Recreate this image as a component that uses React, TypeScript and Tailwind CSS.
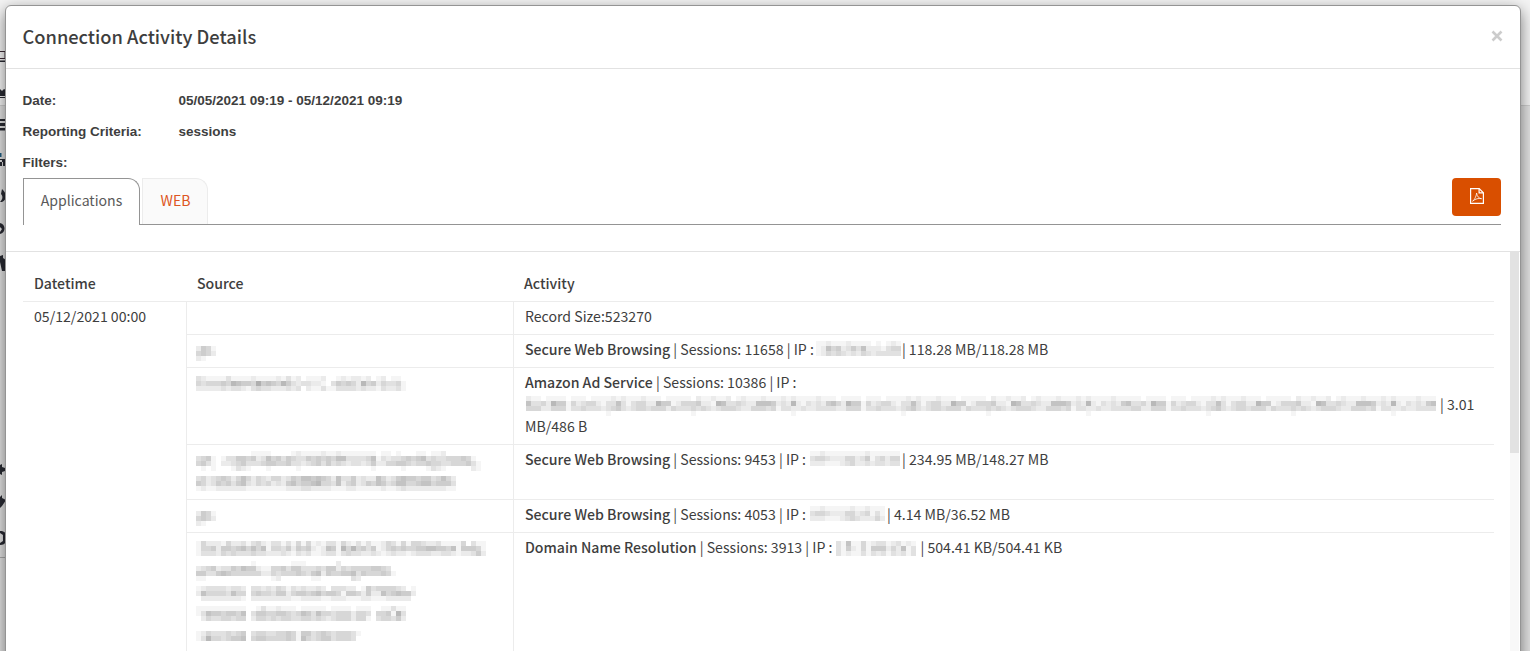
import type { ReactNode } from 'react'

type MaskProps = {
  rows: string[]
  top: number
  className?: string
}

// Pixelated block over private values, one digit per 5px cell (0 = clear, 9 = darkest)
function Mask({ rows, top, className = '' }: MaskProps) {
  const width = Math.max(...rows.map((row) => row.length)) * 5
  return (
    <svg width={width} height={22} className={`inline-block align-top overflow-visible ${className}`} shapeRendering="crispEdges">
      {rows.map((row, y) =>
        row.split('').map((cell, x) => {
          const level = 255 - Number(cell) * 10
          return cell === '0' ? null : (
            <rect key={`${x}-${y}`} x={x * 5} y={top + 2 + y * 5} width={5} height={5} fill={`rgb(${level},${level},${level})`} />
          )
        })
      )}
    </svg>
  )
}

const longIp = [
  '21101111011101111212111211101111102112112012111211121211112111',
  '63342755142344213363134422755124445221763343226665232721323256',
  '44422444133433323453234434442433343432344432244434133223223333',
  '00000000000000001000000000000000010000000000000000000100000000',
]

const longIpRows = longIp.map((row) => row + row.slice(3) + row.slice(1))

type Row = {
  source: MaskProps[]
  activity: ReactNode
}

const records: Row[] = [
  {
    source: [],
    activity: 'Record Size:523270',
  },
  {
    source: [{ top: 6, rows: ['2541', '4542', '2100'] }],
    activity: (
      <>
        <b className="font-medium">Secure Web Browsing</b> | Sessions: 11658 | IP :
        <Mask className="ml-[2px] mr-px" top={1} rows={['11211121111010121', '12645235362221344', '12434323243233333']} />
        | 118.28 MB/118.28 MB
      </>
    ),
  },
  {
    source: [
      {
        top: 3,
        rows: [
          '321111311112111121312011120012122120120110',
          '434445476554856547532332210354542745243341',
          '222223233213433222323021131133332322132231',
        ],
      },
    ],
    activity: (
      <>
        <b className="font-medium">Amazon Ad Service</b> | Sessions: 10386 | IP :
        <br />
        <Mask className="ml-px mr-[4px]" top={1} rows={longIpRows} />
        | 3.01
        <br />
        MB/486 B
      </>
    ),
  },
  {
    source: [
      {
        top: 1,
        rows: [
          '000000000001111000012111121121111111011010001101120000000',
          '345101335545236453543354545466333346132334545634334445410',
          '453102234533345544533234535343233235224455434454433444531',
          '010100013210001000001000000000000001000001000013210000021',
        ],
      },
      {
        top: 4,
        rows: [
          '34234542464243244235466565426335232264235655455346420',
          '54235453563243423256455674436245235465346644566455530',
          '12112222221111111122233222211122111112112322222222110',
        ],
      },
    ],
    activity: (
      <>
        <b className="font-medium">Secure Web Browsing</b> | Sessions: 9453 | IP :
        <Mask className="ml-[4px] mr-[2px]" top={1} rows={['112111111112111111', '344322244235134244', '222111234223233233']} />
        | 234.95 MB/148.27 MB
      </>
    ),
  },
  {
    source: [{ top: 6, rows: ['2541', '4542', '2100'] }],
    activity: (
      <>
        <b className="font-medium">Secure Web Browsing</b> | Sessions: 4053 | IP :
        <Mask className="ml-[4px] mr-[2px]" top={1} rows={['112111112112111', '344322244234131', '222111234322242']} />
        | 4.14 MB/36.52 MB
      </>
    ),
  },
  {
    source: [
      {
        top: 3,
        rows: [
          '1422214223134213313141412133142131311243141443223111140311',
          '1445255456464614435254521265174745351245454455665546155541',
          '1333243433343322232132311233134332232123221233322332122352',
        ],
      },
      {
        top: 1,
        rows: [
          '0000000000010000000111000000200000000000',
          '2345233546552114453553334355243444455430',
          '5533565444444224344454356254455635444541',
          '1100000000000001200000011000000320000000',
        ],
      },
      {
        top: 4,
        rows: [
          '12333323320332324313232232033322015344443201',
          '26444436440454435524554564554155425226456552',
          '02222222210222222221122221122211122111222220',
        ],
      },
      {
        top: 2,
        rows: [
          '111111111100131121110111110111101110011311',
          '136554554603554455434653644344424430445173',
          '024334434402443434433443432344424410344352',
        ],
      },
      {
        top: 5,
        rows: [
          '124333434503443344541553454344431',
          '137443455604554444541643455344430',
        ],
      },
    ],
    activity: (
      <>
        <b className="font-medium">Domain Name Resolution</b> | Sessions: 3913 | IP :
        <Mask className="ml-[4px] mr-[4px]" top={3} rows={['3161141233123121', '3152141555242613', '3121131323132313']} />
        | 504.41 KB/504.41 KB
      </>
    ),
  },
]

function Detail({ label, value }: { label: string; value?: string }) {
  return (
    <div className="flex h-[31px] items-center font-['Liberation_Sans',Arial,sans-serif] text-[13.5px] font-bold">
      <span className="w-[156px]">{label}</span>
      <span>{value}</span>
    </div>
  )
}

// Strip of the side menu left uncovered by the dialog
function MenuEdge() {
  return (
    <svg width="6" height="651" className="absolute left-0 top-0" fill="#292b33">
      <path d="M0 51.5h5v7H0" fill="none" stroke="#3c2a35" />
      <path d="M0 60.5h6v1.5H0z" />
      <path d="M0 89l2 2 2-2 2 1v6H0zM0 97h6v1H0z" />
      <path d="M0 119h6v2H0zM0 123h6v3H0zM0 128h6v2.500H0z" />
      <path d="M0 153h1.500v4H0z" fill="#1d5c80" />
      <path d="M0 159h5v3h1v4H3v-4H2v4H0v-4h2v-2H0z" />
      <path d="M2 189c5 4 5 11 0 13H0c3-3 3-6 1-8z" />
      <path d="M0 223c6 1 6 10 0 11v-2l2-3-2-2z" />
      <path d="M0 256l3-1v3l3 2v11H2l-2-9z" />
      <path d="M0 465l2-1v3l3 1v3l-3 1v3l-2-1z" />
      <path d="M0 497l2-2v3l4 2-4 6-2 2z" />
      <path d="M0 531c4 0 6 2 6 4v6c-1 3-3 4-6 4v-2l3-2v-6l-3-2z" />
      <path d="M0 557h6v1H0z" fill="#aaa" />
    </svg>
  )
}

function PdfIcon() {
  return (
    <svg width="14" height="16" viewBox="0 0 14 16" fill="none" stroke="#fff" strokeWidth="1.2">
      <path d="M.6.6h8.600l4.200 4.200v10.600H.6z" />
      <path d="M9.100.8v4.100h4.100" />
      <path d="M2.600 13.200c1.200-.5 3.600-4.400 4-8.100.3 3.200 2.600 5.700 5 5.600-2.600-.8-6.400.1-9 2.500z" strokeWidth=".8" />
    </svg>
  )
}

export default function App() {
  return (
    <div className="relative h-[651px] overflow-hidden bg-[#e2e2e2] pl-[5px] pt-[5px] font-['Noto_Sans_CJK_JP','Source_Sans_Pro',sans-serif] text-[14.12px] leading-[22px] text-[#3e3e3e]">
      <div className="absolute inset-x-0 top-0 h-[106px] border-b border-[#cfcfcf] bg-[#f4f4f4]" />
      <MenuEdge />

      <div className="relative flex h-[700px] w-[1516px] flex-col rounded-[6px] border border-[#949494] bg-white shadow-[0_5px_15px_rgba(0,0,0,0.5)]">
        <header className="flex h-[63px] shrink-0 items-center justify-between border-b border-[#e2e2e2] pl-[16.5px] pr-[17px]">
          <h1 className="pb-[2px] text-[18.25px] font-medium">Connection Activity Details</h1>
          <button aria-label="Close" className="mb-[3px]">
            <svg width="12" height="12" viewBox="0 0 12 12" stroke="#ccc" strokeWidth="2.600">
              <path d="M1.500 1.500l9 9M10.500 1.500l-9 9" />
            </svg>
          </button>
        </header>

        <div className="h-[183px] shrink-0 border-b border-[#e2e2e2] pl-[17px] pr-[19px] pt-[16px]">
          <div className="-ml-[0.5px]">
            <Detail label="Date:" value="05/05/2021 09:19 - 05/12/2021 09:19" />
            <Detail label="Reporting Criteria:" value="sessions" />
            <Detail label="Filters:" />
          </div>

          <div className="flex h-[47px] items-start">
            <button className="h-[47px] w-[117px] rounded-tr-[12px] border border-b-0 border-[#949494] pb-[5px] text-[#5a5a5a]">
              Applications
            </button>
            <div className="flex h-[47px] flex-1 items-start border-b border-[#949494] pl-[2px]">
              <button className="h-[46px] w-[66px] rounded-tr-[12px] border border-b-0 border-[#ececec] bg-[#fafafa] pb-[4px] pl-px text-[#dd5522]">
                WEB
              </button>
              <button aria-label="Export PDF" className="ml-auto flex h-[38px] w-[49px] justify-center rounded-[4px] bg-[#d94f00] pt-[10px]">
                <PdfIcon />
              </button>
            </div>
          </div>
        </div>

        <div className="flex flex-1 overflow-hidden">
          <div className="flex-1 pl-[17px] pt-[16px]">
            <table className="w-[1471px] table-fixed border-separate border-spacing-0">
              <thead>
                <tr className="h-[33px] text-left">
                  <th className="w-[163px] pb-[4px] pl-[11px] font-medium">Datetime</th>
                  <th className="w-[327px] pb-[4px] pl-[11px] font-medium">Source</th>
                  <th className="pb-[4px] pl-[11px] font-medium">Activity</th>
                </tr>
              </thead>
              <tbody className="align-top">
                {records.map((record, index) => (
                  <tr key={index}>
                    {index === 0 && (
                      <td rowSpan={records.length} className="border-t border-[#ececec] pb-[7px] pl-[11px] pt-[3px]">
                        05/12/2021 00:00
                      </td>
                    )}
                    <td className="border-l border-t border-[#ececec] pb-[7px] pl-[9px] pt-[3px]">
                      {record.source.map((mask, i) => (
                        <div key={i} className="h-[22px]">
                          <Mask {...mask} />
                        </div>
                      ))}
                    </td>
                    <td className="whitespace-nowrap border-l border-t border-[#ececec] pb-[7px] pl-[11px] pt-[3px]">
                      {record.activity}
                    </td>
                  </tr>
                ))}
              </tbody>
            </table>
          </div>
          <div className="w-[9px] bg-[#f8f8f8]">
            <div className="h-[201px] bg-[#e2e2e2]" />
          </div>
          <div className="w-px" />
        </div>
      </div>
    </div>
  )
}
